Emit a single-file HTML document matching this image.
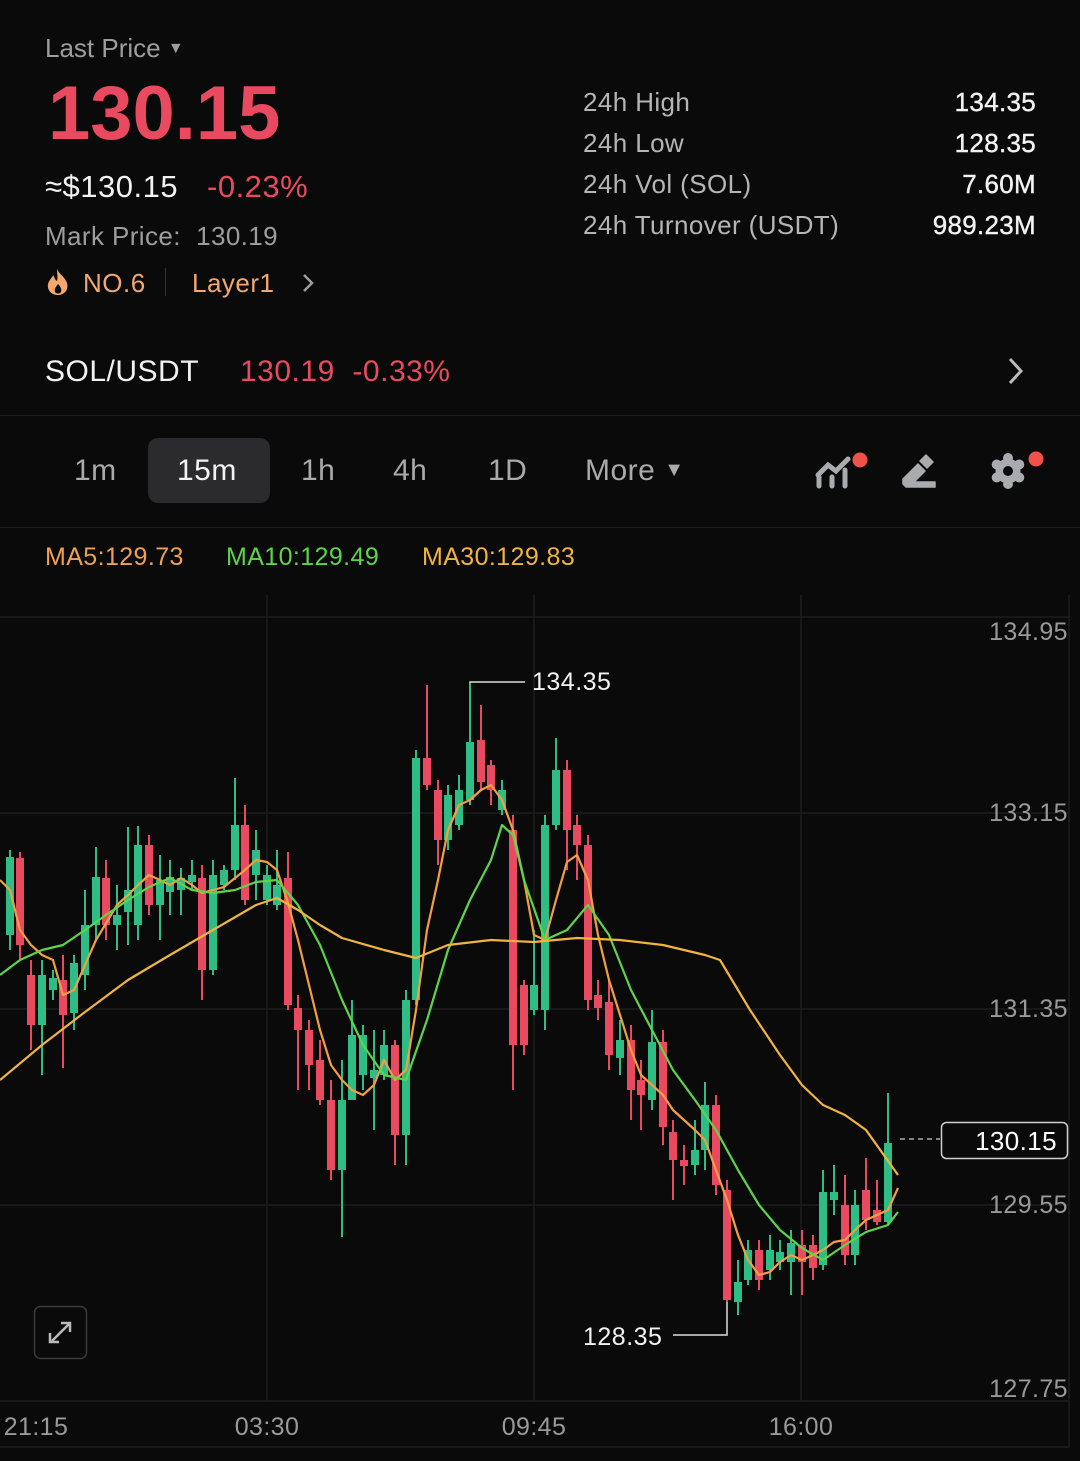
<!DOCTYPE html>
<html><head><meta charset="utf-8"><style>
body{margin:0;background:#0a0a0a;width:1080px;height:1461px;overflow:hidden;position:relative;font-family:"Liberation Sans",sans-serif;}
.t{position:absolute;white-space:nowrap;line-height:1;}
.g{color:#9d9d9d}.w{color:#f2f2f2}.r{color:#ea4a60}.o{color:#f3a86e}
</style></head><body>
<div class="t g" style="left:45px;top:35px;font-size:26px">Last Price <span style="font-size:16px;position:relative;top:-4px">▼</span></div>
<div class="t r" style="left:48px;top:76px;font-size:76px;font-weight:bold;letter-spacing:0px">130.15</div>
<div class="t w" style="left:45px;top:171px;font-size:31px;letter-spacing:0.5px">≈$130.15</div>
<div class="t r" style="left:207px;top:171px;font-size:31px;letter-spacing:0.5px">-0.23%</div>
<div class="t g" style="left:45px;top:223px;font-size:26px;letter-spacing:0.4px">Mark Price:&nbsp; 130.19</div>
<svg style="position:absolute;left:45px;top:268px" width="26" height="28" viewBox="0 0 26 28"><path d="M12 1C14 6 20 9 22 15c2 7-3 12-9 12S2 23 3 16c1-4 4-6 5-9 2 3 2 5 4 6 1-4 0-8 0-12z" fill="#f3a86e"/><path d="M13 16c2 2 4 5 3 8-1 2-5 2-6 0-1-3 1-5 3-8z" fill="#0a0a0a"/></svg>
<div class="t o" style="left:83px;top:270px;font-size:26px;letter-spacing:0.5px">NO.6</div>
<div style="position:absolute;left:165px;top:268px;width:1px;height:28px;background:#333"></div>
<div class="t o" style="left:192px;top:270px;font-size:26px;letter-spacing:0.5px">Layer1</div>
<svg style="position:absolute;left:300px;top:272px" width="16" height="22"><path d="M4 3l8 8-8 8" stroke="#9d9d9d" stroke-width="2.5" fill="none"/></svg>

<div class="t" style="left:583px;top:82px;font-size:26px;color:#b5b5b5;line-height:41px;letter-spacing:0.4px">24h High<br>24h Low<br>24h Vol (SOL)<br>24h Turnover (USDT)</div>
<div class="t w" style="right:44px;top:82px;font-size:26px;line-height:41px;text-align:right;letter-spacing:0.3px;-webkit-text-stroke:0.4px #f2f2f2">134.35<br>128.35<br>7.60M<br>989.23M</div>

<div class="t w" style="left:45px;top:357px;font-size:30px;letter-spacing:0.5px">SOL/USDT</div>
<div class="t r" style="left:240px;top:357px;font-size:30px;letter-spacing:0.5px">130.19&nbsp;&nbsp;-0.33%</div>
<svg style="position:absolute;left:1003px;top:356px" width="24" height="30"><path d="M7 3l11 12L7 27" stroke="#bbb" stroke-width="3" fill="none"/></svg>
<div style="position:absolute;left:0;top:415px;width:1080px;height:1px;background:#1f1f1f"></div>

<div style="position:absolute;left:148px;top:438px;width:122px;height:65px;background:#2b2b2d;border-radius:10px"></div>
<div class="t" style="left:74px;top:456px;font-size:30px;color:#aaa;letter-spacing:0.5px">1m</div>
<div class="t w" style="left:177px;top:456px;font-size:30px;letter-spacing:0.5px">15m</div>
<div class="t" style="left:301px;top:456px;font-size:30px;color:#aaa;letter-spacing:0.5px">1h</div>
<div class="t" style="left:393px;top:456px;font-size:30px;color:#aaa;letter-spacing:0.5px">4h</div>
<div class="t" style="left:488px;top:456px;font-size:30px;color:#aaa;letter-spacing:0.5px">1D</div>
<div class="t" style="left:585px;top:456px;font-size:30px;color:#aaa;letter-spacing:0.5px">More <span style="font-size:20px;position:relative;top:-4px">▼</span></div>
<svg style="position:absolute;left:810px;top:445px" width="250" height="50" viewBox="810 445 250 50">
<g stroke="#a9abae" stroke-width="5" stroke-linecap="round" fill="none">
<path d="M818 475l10-10 8 6 12-12"/><path d="M819 477v9M832 477v9M845 470v16"/>
</g>
<polygon points="903,479 918,464 925,471 914,482 935,482 935,487 906,487 903,484" fill="#a9abae" stroke="#a9abae" stroke-width="1.5" stroke-linejoin="round"/>
<polygon points="920,461 926,455 933,462 927,468" fill="#a9abae" stroke="#a9abae" stroke-width="1.5" stroke-linejoin="round"/>
<circle cx="860" cy="460" r="7.5" fill="#f0524a"/>
<circle cx="1036" cy="459" r="7.5" fill="#f0524a"/>
<g fill="#a9abae">
<circle cx="1008" cy="471" r="12.5"/>
<circle cx="1008" cy="458" r="5"/><circle cx="1008" cy="484" r="5"/>
<circle cx="996.7" cy="464.5" r="5"/><circle cx="1019.3" cy="464.5" r="5"/>
<circle cx="996.7" cy="477.5" r="5"/><circle cx="1019.3" cy="477.5" r="5"/>
</g>
<circle cx="1008" cy="471" r="5" fill="#0a0a0a"/>
</svg>
<div style="position:absolute;left:0;top:527px;width:1080px;height:1px;background:#1f1f1f"></div>
<div class="t" style="left:45px;top:545px;font-size:25px;color:#f0a050;letter-spacing:0.4px">MA5:129.73</div>
<div class="t" style="left:226px;top:545px;font-size:25px;color:#5ed44a;letter-spacing:0.4px">MA10:129.49</div>
<div class="t" style="left:422px;top:545px;font-size:25px;color:#f1b43c;letter-spacing:0.4px">MA30:129.83</div>

<svg style="position:absolute;left:0;top:0" width="1080" height="1461" viewBox="0 0 1080 1461">
<g stroke="#1c1c1c" stroke-width="1.5">
<path d="M267 595V1401M534 595V1401M801 595V1401M1069 595V1447"/>
<path d="M0 617H1069M0 813H1069M0 1009H1069M0 1205H1069M0 1401H1069M0 1447H1069"/>
</g>
<g fill="#999" font-size="25" text-anchor="end" font-family="Liberation Sans,sans-serif" letter-spacing="0.4">
<text x="1068" y="640">134.95</text><text x="1068" y="821">133.15</text><text x="1068" y="1017">131.35</text><text x="1068" y="1213">129.55</text><text x="1068" y="1397">127.75</text>
</g>
<g fill="#999" font-size="25" text-anchor="middle" font-family="Liberation Sans,sans-serif" letter-spacing="0.4">
<text x="36" y="1435">21:15</text><text x="267" y="1435">03:30</text><text x="534" y="1435">09:45</text><text x="801" y="1435">16:00</text>
</g>
<g stroke="#2ebd85" stroke-width="2" fill="none">
<path d="M10 850V950M42 960V1075M53 970V1000M74 955V1030M85 890V990M96 847V940M117 885V950M128 827V945M138 826V940M160 855V940M170 860V915M181 868V915M192 860V890M213 860V975M224 865V890M235 778V880M256 830V900M267 865V905M277 850V910M342 1060V1237M352 1000V1100M363 1025V1090M374 1030V1130M384 1030V1080M406 990V1165M416 750V1005M448 785V850M459 775V830M470 683V805M502 780V815M534 930V1015M545 815V1030M556 738V830M620 1020V1075M652 1010V1110M695 1120V1175M705 1082V1170M738 1260V1315M748 1240V1285M770 1235V1280M780 1240V1270M791 1230V1295M823 1170V1270M834 1165V1215M855 1190V1265M888 1093V1225"/>
</g>
<g fill="#2ebd85">
<path d="M6 857h8v78h-8zM38 975h8v50h-8zM49 978h8v12h-8zM70 963h8v50h-8zM81 925h8v50h-8zM92 877h8v48h-8zM113 915h8v10h-8zM124 890h8v22h-8zM134 845h8v80h-8zM156 880h8v25h-8zM166 877h8v15h-8zM177 878h8v12h-8zM188 875h8v7h-8zM209 875h8v95h-8zM220 870h8v15h-8zM231 825h8v45h-8zM252 850h8v25h-8zM263 875h8v25h-8zM273 885h8v20h-8zM338 1100h8v70h-8zM348 1035h8v65h-8zM359 1035h8v40h-8zM370 1070h8v8h-8zM380 1045h8v30h-8zM402 1000h8v135h-8zM412 758h8v242h-8zM444 795h8v45h-8zM455 790h8v35h-8zM466 742h8v58h-8zM498 790h8v20h-8zM530 985h8v25h-8zM541 825h8v185h-8zM552 770h8v55h-8zM616 1040h8v18h-8zM648 1042h8v58h-8zM691 1150h8v15h-8zM701 1105h8v45h-8zM734 1282h8v20h-8zM744 1250h8v30h-8zM766 1250h8v20h-8zM776 1252h8v10h-8zM787 1243h8v19h-8zM819 1192h8v73h-8zM830 1192h8v8h-8zM851 1205h8v50h-8zM884 1143h8v79h-8z"/>
</g>
<g stroke="#ea4a60" stroke-width="2" fill="none">
<path d="M20 852V960M31 960V1050M63 955V1068M106 860V940M149 835V915M202 865V1000M245 805V905M288 852V1010M298 995V1090M309 1020V1090M320 1040V1105M331 1080V1180M395 1040V1165M427 685V790M438 780V865M481 705V790M491 760V805M513 815V1090M524 980V1055M567 760V870M577 815V880M588 835V1010M598 980V1020M609 980V1070M631 1025V1120M641 1060V1130M663 1030V1145M673 1120V1200M684 1145V1185M716 1095V1195M727 1180V1302M759 1240V1290M802 1230V1295M813 1235V1280M845 1175V1265M866 1158V1230M877 1180V1225"/>
</g>
<g fill="#ea4a60">
<path d="M16 858h8v87h-8zM27 975h8v50h-8zM59 980h8v35h-8zM102 878h8v47h-8zM145 845h8v60h-8zM198 878h8v92h-8zM241 825h8v75h-8zM284 878h8v127h-8zM294 1008h8v22h-8zM305 1030h8v35h-8zM316 1060h8v40h-8zM327 1100h8v70h-8zM391 1045h8v90h-8zM423 758h8v27h-8zM434 790h8v50h-8zM477 740h8v42h-8zM487 765h8v25h-8zM509 830h8v215h-8zM520 985h8v60h-8zM563 770h8v60h-8zM573 825h8v20h-8zM584 845h8v155h-8zM594 995h8v13h-8zM605 1002h8v53h-8zM627 1040h8v50h-8zM637 1080h8v15h-8zM659 1042h8v85h-8zM669 1132h8v28h-8zM680 1160h8v6h-8zM712 1105h8v80h-8zM723 1190h8v110h-8zM755 1250h8v30h-8zM798 1245h8v17h-8zM809 1245h8v23h-8zM841 1205h8v50h-8zM862 1190h8v30h-8zM873 1210h8v12h-8z"/>
</g>
<g fill="none" stroke-width="2.2" stroke-linejoin="round">
<polyline stroke="#f0a040" points="0,880 10,890 20,930 31,945 42,955 53,960 63,995 74,990 85,965 96,940 117,905 128,895 138,885 149,875 160,880 170,885 181,878 192,885 202,893 213,890 224,887 235,878 245,870 256,860 267,862 277,870 288,903 298,940 309,985 320,1030 331,1065 342,1080 352,1090 363,1095 374,1085 384,1060 395,1080 406,1070 416,1010 427,930 438,880 448,830 459,805 470,800 481,790 491,785 502,800 513,830 524,880 534,935 545,940 556,900 567,862 577,855 588,880 598,935 609,980 620,1015 631,1050 641,1075 652,1085 663,1095 673,1110 684,1120 695,1130 705,1140 716,1170 727,1200 738,1235 748,1260 759,1275 770,1272 780,1262 791,1255 802,1260 813,1255 823,1250 834,1242 845,1240 855,1230 866,1220 877,1215 888,1210 898,1188"/>
<polyline stroke="#5ed44a" points="0,975 20,960 42,950 63,945 85,930 106,915 128,900 149,887 170,878 192,890 213,893 235,890 256,882 277,880 298,905 320,945 342,1000 363,1045 384,1075 406,1080 427,1020 448,950 470,900 491,860 502,825 513,835 524,880 545,940 567,930 588,905 609,935 631,990 652,1030 673,1070 695,1100 716,1130 738,1170 759,1205 780,1230 802,1248 823,1260 845,1245 866,1232 888,1225 898,1212"/>
<polyline stroke="#f1b43c" points="0,1080 42,1045 85,1012 128,980 170,955 213,930 256,905 277,898 298,910 320,925 342,938 384,950 416,958 448,945 491,940 534,942 577,938 620,940 663,945 705,955 720,960 750,1010 780,1055 802,1085 823,1105 845,1115 866,1130 898,1175"/>
</g>
<path d="M470 683V682H525" stroke="#ddd" stroke-width="1.5" fill="none"/>
<path d="M727 1302V1335H673" stroke="#ddd" stroke-width="1.5" fill="none"/>
<g fill="#f2f2f2" font-size="25" font-family="Liberation Sans,sans-serif" letter-spacing="0.5">
<text x="532" y="690">134.35</text><text x="583" y="1345">128.35</text>
</g>
<path d="M900 1139H940" stroke="#aaa" stroke-width="1.5" stroke-dasharray="5 4"/>
<rect x="941.5" y="1122.5" width="126" height="36" rx="5" fill="#0a0a0a" stroke="#cfcfcf" stroke-width="1.5"/>
<text x="1057" y="1150" fill="#fff" font-size="26" text-anchor="end" font-family="Liberation Sans,sans-serif" letter-spacing="0.4">130.15</text>
<rect x="34.5" y="1306.5" width="52" height="52" rx="6" fill="#0a0a0a" stroke="#3a3a3a" stroke-width="1.5"/>
<g stroke="#bbb" stroke-width="2.5" fill="none"><path d="M52 1341l17-17"/><path d="M61 1323h9v9M50 1333v9h9"/></g>
</svg>
</body></html>
